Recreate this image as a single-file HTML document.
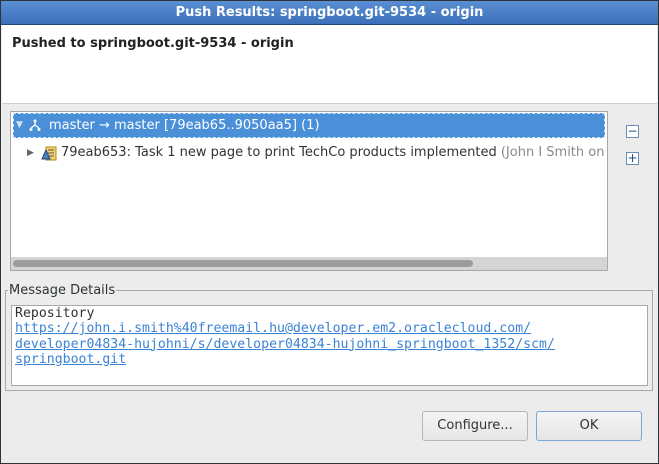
<!DOCTYPE html>
<html><head><style>
body{margin:0;width:659px;height:464px;overflow:hidden;font-family:"DejaVu Sans","Liberation Sans",sans-serif;font-size:13px;color:#2e3436;position:relative;background:#ececec}
.win{position:absolute;left:0;top:0;width:657px;height:462px;border:1px solid #2e3436;background:#ececec}
.title{position:absolute;left:0;top:0;width:657px;height:23px;background:linear-gradient(#5b8fd4,#3b6fb8);border-bottom:1px solid #24477a;color:#fff;font-weight:bold;font-size:13px;text-align:center;line-height:24px}
.head{position:absolute;left:1px;top:24px;width:655px;height:78px;background:#fff;border-bottom:1px solid #cfcfcf}
.head b{position:absolute;left:10px;top:11px;font-size:13px;color:#222}
.tree{position:absolute;left:9px;top:110px;width:596px;height:158px;border:1px solid #a8a8a8;background:#fff}
.sel{position:absolute;left:2px;top:1px;width:592px;height:25px;background:#4a90d9;box-sizing:border-box;border:1px dashed #cfe0f5;color:#fff;line-height:23px}
.row2{position:absolute;left:2px;top:30px;height:22px;line-height:22px;white-space:nowrap;width:592px;overflow:hidden}
.sb{position:absolute;left:0;bottom:0;width:596px;height:13px;background:#d4d4d4}
.sb div{position:absolute;left:2px;top:3px;width:460px;height:7px;border-radius:4px;background:#9c9c9c}
.ib{position:absolute;left:625px;width:11px;height:11px;border:1px solid #6a8fb5;background:#fff;color:#1d4c7c;font-size:12px;line-height:10px;text-align:center}
.ib:before{content:"";position:absolute;left:-4px;top:-4px;width:11px;height:11px;border:1px solid #9fb6cc;z-index:-1}
fieldset{position:absolute;left:4px;top:282px;width:646px;height:106px;margin:0;padding:0;border:1px solid #a8a8a8}
legend{padding:0 1px;margin-left:2px;font-size:13px;color:#2e3436}
.ta{position:absolute;left:10px;top:304px;width:637px;height:81px;border:1px solid #a8a8a8;background:#fff;font-family:"DejaVu Sans Mono","Liberation Mono",monospace;font-size:13.2px;line-height:15.3px;padding:0 0 0 3px;box-sizing:border-box;white-space:nowrap}
.ta a{color:#3b83d6;text-decoration:underline}
.btn{position:absolute;top:410px;width:106px;height:30px;box-sizing:border-box;border:1px solid #b6b6b6;border-radius:3px;background:linear-gradient(#f4f4f4,#e6e6e6);text-align:center;line-height:28px;color:#2e3436}
</style></head><body><div class="win">
<div class="title">Push Results: springboot.git-9534 - origin</div>
<div class="head"><b>Pushed to springboot.git-9534 - origin</b></div>
<div class="tree">
 <div class="sel"><span style="position:absolute;left:2px;top:0;font-size:9px;color:#cfe0f5">▼</span>
 <svg style="position:absolute;left:14px;top:5px" width="14" height="13" viewBox="0 0 14 13"><path d="M7 1v5M7 6L3 9M7 6l4 3" stroke="#fff" fill="none" stroke-width="1.3"/><circle cx="7" cy="2" r="1.5" fill="#fff"/><circle cx="3" cy="10.5" r="1.5" fill="#fff"/><circle cx="11" cy="10.5" r="1.5" fill="#fff"/></svg>
 <span style="position:absolute;left:35px">master → master [79eab65..9050aa5] (1)</span></div>
 <div class="row2"><span style="position:absolute;left:14px;font-size:9px;color:#666">▶</span>
 <svg style="position:absolute;left:28px;top:4px" width="16" height="15" viewBox="0 0 16 15"><rect x="5" y="1" width="10" height="13" fill="#f3d36a" stroke="#b08a20"/><path d="M7 4h6M7 7h6M7 10h6" stroke="#555"/><path d="M1 13L5 4l4 9z" fill="#4a7fc1" stroke="#1d4c7c"/></svg>
 <span style="position:absolute;left:48px">79eab653: Task 1 new page to print TechCo products implemented <span style="color:#8a8a8a">(John I Smith on</span></span></div>
 <div class="sb"><div></div></div>
</div>
<div class="ib" style="top:124px">−</div>
<div class="ib" style="top:151px">+</div>
<fieldset><legend>Message Details</legend></fieldset>
<div class="ta">Repository<br><a>https://john.i.smith%40freemail.hu@developer.em2.oraclecloud.com/</a><br><a>developer04834-hujohni/s/developer04834-hujohni_springboot_1352/scm/</a><br><a>springboot.git</a></div>
<div class="btn" style="left:421px">Configure...</div>
<div class="btn" style="left:535px;border-color:#7ea6d8">OK</div>
</div></body></html>
